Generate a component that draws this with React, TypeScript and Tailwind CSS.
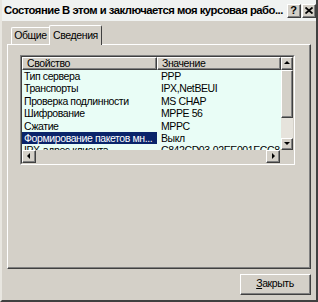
import React from "react";

const rows: [string, string][] = [
  ["Тип сервера", "PPP"],
  ["Транспорты", "IPX,NetBEUI"],
  ["Проверка подлинности", "MS CHAP"],
  ["Шифрование", "MPPE 56"],
  ["Сжатие", "MPPC"],
  ["Формирование пакетов мн...", "Выкл"],
  ["IPX-адрес клиента", "C842CD03-02EE001ECC84"],
];

function Raised({ className = "", children }: { className?: string; children?: React.ReactNode }) {
  return (
    <div className={"border-t border-l border-t-white border-l-white border-r border-b border-r-[#404040] border-b-[#404040] " + className}>
      <div className="w-full h-full border-r border-b border-r-[#808080] border-b-[#808080] bg-[#d4d0c8] flex items-center justify-center">
        {children}
      </div>
    </div>
  );
}

function Arrow({ dir }: { dir: "up" | "down" | "left" | "right" }) {
  const pts: Record<string, string> = {
    up: "1,5 4,2 7,5",
    down: "1,2 4,5 7,2",
    left: "5,1 2,4 5,7",
    right: "3,1 6,4 3,7",
  };
  return (
    <svg width="8" height="8" viewBox="0 0 8 8">
      <polygon points={pts[dir]} fill="#000" />
    </svg>
  );
}

export default function App() {
  return (
    <div className="w-[318px] h-[302px] bg-[#d4d0c8] flex flex-col border-l-2 border-l-[#e8e6e0] border-r-2 border-r-[#404040] border-b-2 border-b-[#404040] font-['Liberation_Sans',sans-serif] text-[10.5px] tracking-[-0.4px] text-black overflow-hidden">
      {/* Title bar */}
      <div className="h-[21px] bg-[#f0f2f1] flex items-center pl-[2px] pr-[0px] shrink-0">
        <div className="flex-1 text-[11.3px] font-bold tracking-[-0.5px] whitespace-nowrap leading-none">
          Состояние В этом и заключается моя курсовая рабо...
        </div>
        <div className="flex gap-[1px] mr-[0px]">
          <Raised className="w-[14px] h-[14px]">
            <span className="text-[11px] font-bold leading-none tracking-normal">?</span>
          </Raised>
          <Raised className="w-[14px] h-[14px]">
            <svg width="8" height="7" viewBox="0 0 8 7">
              <path d="M0.5 0.5 L7.5 6.5 M7.5 0.5 L0.5 6.5" stroke="#000" strokeWidth="1.8" />
            </svg>
          </Raised>
        </div>
      </div>

      {/* Tabs */}
      <div className="flex items-end h-[22px] pl-[9px] shrink-0 mt-[1px]">
        <div className="h-[17px] w-[38px] border-t border-l border-t-white border-l-white flex items-center justify-center rounded-tl-[2px]">
          <span>Общие</span>
        </div>
        <div className="h-[20px] w-[53px] border-t border-l border-t-white border-l-white border-r border-r-[#404040] flex items-start justify-center pt-[2px] rounded-tl-[2px] rounded-tr-[2px] relative top-[1px] bg-[#d4d0c8] z-10">
          <span>Сведения</span>
        </div>
      </div>

      {/* Tab panel */}
      <div className="ml-[5px] mr-[5px] h-[225px] border-t border-l border-t-white border-l-white border-r border-b border-r-[#404040] border-b-[#404040] shrink-0">
        <div className="w-full h-full border-r border-b border-r-[#808080] border-b-[#808080] pt-[10px] pl-[12px] pr-[14px]">
          {/* List view */}
          <div className="h-[110px] border-t border-l border-t-[#808080] border-l-[#808080] border-r border-b border-r-white border-b-white">
            <div className="w-full h-full border-t border-l border-t-[#404040] border-l-[#404040] border-r border-b border-r-[#d4d0c8] border-b-[#d4d0c8] flex flex-col bg-[#e9fdf6] overflow-hidden">
              <div className="flex flex-1 min-h-0">
                <div className="flex-1 flex flex-col min-w-0 overflow-hidden">
                  {/* header */}
                  <div className="flex h-[13px] shrink-0">
                    <Raised className="w-[135px] h-[13px]">
                      <span className="w-full pl-[4px] leading-none">Свойство</span>
                    </Raised>
                    <Raised className="flex-1 h-[13px]">
                      <span className="w-full pl-[4px] leading-none">Значение</span>
                    </Raised>
                  </div>
                  {rows.map(([k, v], i) => (
                    <div key={i} className="flex h-[12.4px] shrink-0 items-center leading-none">
                      <div className={"w-[135px] h-full flex items-center pl-[2px] whitespace-nowrap overflow-hidden " + (i === 5 ? "bg-[#0a246a] text-white" : "")}>
                        {k}
                      </div>
                      <div className="flex-1 pl-[4px] whitespace-nowrap overflow-hidden">{v}</div>
                    </div>
                  ))}
                </div>
                {/* vertical scrollbar */}
                <div className="w-[12px] flex flex-col shrink-0">
                  <Raised className="w-[12px] h-[13px]">
                    <Arrow dir="up" />
                  </Raised>
                  <Raised className="w-[12px] h-[48px]" />
                  <div className="flex-1 bg-[#e6e3dc]" />
                  <Raised className="w-[12px] h-[12px]">
                    <Arrow dir="down" />
                  </Raised>
                </div>
              </div>
              {/* horizontal scrollbar */}
              <div className="flex h-[13px] shrink-0 bg-[#d4d0c8]">
                <Raised className="w-[14px] h-[13px]">
                  <Arrow dir="left" />
                </Raised>
                <div className="flex-1" />
                <Raised className="w-[14px] h-[13px]">
                  <Arrow dir="right" />
                </Raised>
                <div className="w-[13px]" />
              </div>
            </div>
          </div>
        </div>
      </div>

      {/* Bottom button */}
      <div className="flex justify-end pr-[5px] pt-[5px]">
        <div className="w-[71px] h-[21px] border-t border-l border-t-white border-l-white border-r border-b border-r-[#404040] border-b-[#404040]">
          <div className="w-full h-full border-r border-b border-r-[#808080] border-b-[#808080] flex items-center justify-center">
            <span>
              <span className="underline">З</span>акрыть
            </span>
          </div>
        </div>
      </div>
    </div>
  );
}
